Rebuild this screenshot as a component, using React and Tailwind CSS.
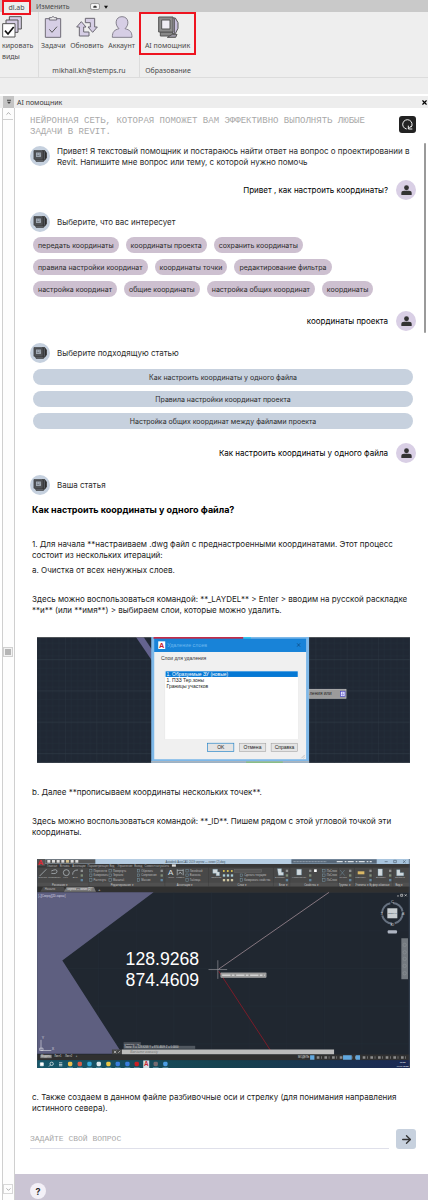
import { ArrowRight, ChevronDown, ChevronUp, X } from 'lucide-react';

const TOPICS = [
    ['передать координаты', 'координаты проекта', 'сохранить координаты'],
    ['правила настройки координат', 'координаты точки', 'редактирование фильтра'],
    ['настройка координат', 'общие координаты', 'настройка общих координат', 'координаты'],
];

const ARTICLES = [
    'Как настроить координаты у одного файла',
    'Правила настройки координат проекта',
    'Настройка общих координат между файлами проекта',
];

export default function App() {
    return (
        <div className="min-h-screen flex flex-col overflow-hidden bg-white font-['Inter','Noto_Sans',sans-serif] text-[8px] leading-[11px] text-[#2b2b2b]">
            <Ribbon />
            <PanelTitle />
            <div className="flex flex-1">
                <Gutter />
                <main className="relative flex min-w-0 flex-1 flex-col">
                    <div className="absolute right-[2px] top-[35px] h-[190px] w-[2px] rounded-full bg-[#9a9a9a]" />
                    <Chat />
                    <Footer />
                </main>
            </div>
        </div>
    );
}

function Ribbon() {
    return (
        <header className="bg-[#eeeeee] pb-4 font-['Noto_Sans',sans-serif] text-[7px] text-[#4a4a4a]">
            <nav className="flex h-3 items-start bg-[#c9c9c9] pl-[2px]">
                <button className="relative z-10 h-[15px] w-[29px] shrink-0 border-2 border-[#ee1420] bg-[#eeeeee] leading-[10px]">dl.ab</button>
                <button className="ml-[5px] h-3">Изменить</button>
                <button aria-label="Вид ленты" className="ml-5 flex h-[13px] items-center gap-1">
                    <svg className="h-[7px] w-[10px]" viewBox="0 0 30 21">
                        <rect x="1.5" y="1.5" width="27" height="18" rx="5" fill="#f4f4f4" stroke="#777" strokeWidth="2" />
                        <path d="M10 13h10l-5-6z" fill="#333" />
                        <path d="M10 10h10v4H10z" fill="#333" />
                    </svg>
                    <svg className="size-[4px]" viewBox="0 0 12 12">
                        <path d="M0 2h12L6 11z" fill="#111" />
                    </svg>
                </button>
            </nav>
            <div className="flex h-[66px] border-b border-[#dcdcdc]">
                <div className="w-[39px] shrink-0 overflow-hidden border-r border-[#dcdcdc] pt-1">
                    <StackIcon />
                    <button className="flex flex-col items-start whitespace-nowrap pl-[2px] pt-[2px] text-left">
                        <span>кировать</span>
                        <span>виды</span>
                    </button>
                </div>
                <div className="flex w-[101px] shrink-0 flex-col justify-between border-r border-[#dcdcdc] pb-[1px] pt-1">
                    <div className="flex justify-between pl-[2px] pr-1">
                        <Tool label="Задачи"><TaskIcon /></Tool>
                        <Tool label="Обновить"><SyncIcon /></Tool>
                        <Tool label="Аккаунт"><AccountIcon /></Tool>
                    </div>
                    <p className="text-center">mikhail.kh@stemps.ru</p>
                </div>
                <div className="flex w-[56px] shrink-0 flex-col justify-between pb-[1px]">
                    <div className="-ml-[1px] flex h-[43px] items-center justify-center border-2 border-[#ee1420]">
                        <Tool label="AI помощник"><ComputerIcon /></Tool>
                    </div>
                    <p className="text-center">Образование</p>
                </div>
            </div>
        </header>
    );
}

function Tool({ label, children }) {
    return (
        <button className="flex flex-col items-center gap-[2px] whitespace-nowrap">
            {children}
            <span>{label}</span>
        </button>
    );
}

function PanelTitle() {
    return (
        <div className="flex h-[14px] items-center border-t-2 border-white bg-[#ededed] font-['Noto_Sans',sans-serif] text-[7px] text-[#3c3c3c]">
            <button aria-label="Меню панели" className="ml-[3px] flex h-3 w-[11px] items-center justify-center bg-[#c4c4c4]">
                <svg className="size-[6px]" viewBox="0 0 18 18">
                    <path d="M3 2h12v3H3zM3 8h12l-6 7z" fill="#444" />
                </svg>
            </button>
            <h1 className="ml-[3px] flex-1">AI помощник</h1>
            <button aria-label="Закрыть"><X className="size-[7px] text-black" strokeWidth={4} /></button>
        </div>
    );
}

function Gutter() {
    return (
        <aside className="ml-[2px] flex w-[13px] shrink-0 border-x border-[#cfcfcf] bg-[#fdfdfd]">
            <div className="flex w-[10px] flex-col items-center justify-between">
                <button aria-label="Вверх" className="flex h-3 w-full items-center justify-center border-b border-[#d0d0d0]">
                    <ChevronUp className="size-[7px] text-[#777]" />
                </button>
                <div className="flex size-[10px] items-center justify-center border border-[#d0d0d0] bg-[#f2f2f2]">
                    <div className="size-[6px] bg-[#b5b5b5]" />
                </div>
                <button aria-label="Вниз" className="mb-[6px] flex h-[10px] w-full items-center justify-center border border-[#d8d8d8]">
                    <ChevronDown className="size-[7px] text-[#777]" />
                </button>
            </div>
        </aside>
    );
}

function Chat() {
    return (
        <div className="flex-1 pb-6 pl-[15px] pr-3 pt-2">
            <div className="flex items-start justify-between">
                <p className="max-w-[350px] font-['Liberation_Mono',monospace] text-[9px] leading-[11px] text-[#a8a8a8]">
                    НЕЙРОННАЯ СЕТЬ, КОТОРАЯ ПОМОЖЕТ ВАМ ЭФФЕКТИВНО ВЫПОЛНЯТЬ ЛЮБЫЕ ЗАДАЧИ В REVIT.
                </p>
                <button aria-label="Начать заново" className="flex size-[17px] shrink-0 items-center justify-center rounded-[3px] bg-[#222222]">
                    <svg className="size-[13px]" viewBox="0 0 39 39" fill="none" stroke="#f2f2f2" strokeWidth="3">
                        <path d="M17 33A14 14 0 1 1 30 28" />
                        <path d="M22 23v10h12" />
                        <path d="M23 32l9-9" />
                    </svg>
                </button>
            </div>

            <div className="mt-2">
                <BotMessage>
                    Привет! Я текстовый помощник и постараюсь найти ответ на вопрос о проектировании в Revit. Напишите мне вопрос или тему, с которой нужно помочь
                </BotMessage>
            </div>
            <UserMessage>Привет , как настроить координаты?</UserMessage>

            <BotMessage>Выберите, что вас интересует</BotMessage>
            <div className="mb-[14px] mt-[5px] flex flex-col gap-[6px] pl-[3px]">
                {TOPICS.map((row) => (
                    <div key={row[0]} className="flex gap-[7px]">
                        {row.map((topic) => (
                            <button key={topic} className="h-4 whitespace-nowrap rounded-full bg-[#cdc0d0] px-[5px] text-[7px]">
                                {topic}
                            </button>
                        ))}
                    </div>
                ))}
            </div>
            <UserMessage tight>координаты проекта</UserMessage>

            <BotMessage>Выберите подходящую статью</BotMessage>
            <div className="mb-[14px] mt-[6px] flex flex-col gap-[6px] px-[3px]">
                {ARTICLES.map((title) => (
                    <button key={title} className="h-4 rounded-full bg-[#c7d1de] text-[7px]">
                        {title}
                    </button>
                ))}
            </div>
            <UserMessage tight>Как настроить координаты у одного файла</UserMessage>

            <BotMessage>Ваша статья</BotMessage>
            <Article />

            <form className="mt-[15px] flex gap-[7px]" onSubmit={(e) => e.preventDefault()}>
                <input
                    aria-label="Задайте свой вопрос"
                    placeholder="ЗАДАЙТЕ СВОЙ ВОПРОС"
                    className="h-5 min-w-0 flex-1 border-b border-[#dfe0ea] font-['Liberation_Mono',monospace] text-[8px] outline-none placeholder:text-[#a8a8a8]"
                />
                <button aria-label="Отправить" className="flex size-5 shrink-0 items-center justify-center rounded-[3px] bg-[#c7d1de]">
                    <ArrowRight className="size-[13px] text-[#333]" strokeWidth={2.5} />
                </button>
            </form>
        </div>
    );
}

function BotMessage({ children }) {
    return (
        <div className="flex min-h-5 items-start gap-[7px]">
            <div className="flex size-5 shrink-0 items-center justify-center rounded-full bg-[#c5d0de]">
                <BotIcon />
            </div>
            <p className="flex min-h-5 items-center">{children}</p>
        </div>
    );
}

function UserMessage({ children, tight }) {
    return (
        <div className={`flex items-center justify-end gap-2 text-black ${tight ? 'mb-3' : 'my-3'}`}>
            <p>{children}</p>
            <div className="flex size-5 shrink-0 items-center justify-center rounded-full bg-[#d9cfe5]">
                <svg className="size-[11px]" viewBox="0 0 32 32" fill="#333">
                    <circle cx="16" cy="8" r="7" />
                    <path d="M1 29v-5q0-7 8-7h14q8 0 8 7v5z" />
                </svg>
            </div>
        </div>
    );
}

function Article() {
    return (
        <article className="mt-[9px] pl-[2px] text-[#222]">
            <h2 className="text-[9px] font-bold leading-3 text-black">Как настроить координаты у одного файла?</h2>
            <p className="mt-[23px]">
                1. Для начала **настраиваем .dwg файл с преднастроенными координатами. Этот процесс состоит из нескольких итераций:
            </p>
            <p className="mt-1">a. Очистка от всех ненужных слоев.</p>
            <p className="mt-[18px]">
                Здесь можно воспользоваться командой: **_LAYDEL** &gt; Enter &gt; вводим на русской раскладке **и** (или **имя**) &gt; выбираем слои, которые можно удалить.
            </p>
            <div className="mt-[21px] pl-[5px] pr-[6px]"><LayerDialogShot /></div>
            <p className="mt-6">b. Далее **прописываем координаты нескольких точек**.</p>
            <p className="mt-[18px]">
                Здесь можно воспользоваться командой: **_ID**. Пишем рядом с этой угловой точкой эти координаты.
            </p>
            <div className="mt-[21px] pl-[5px] pr-[6px]"><AutocadShot /></div>
            <p className="mt-6">
                c. Также создаем в данном файле разбивочные оси и стрелку (для понимания направления истинного севера).
            </p>
        </article>
    );
}

function Footer() {
    return (
        <footer className="h-[26px] bg-[#cbc5d4] pl-[15px] pt-[9px]">
            <button aria-label="Справка" className="flex size-4 items-center justify-center rounded-full bg-[#f3f0f7] text-[9px] font-bold">?</button>
        </footer>
    );
}

// Layer removal dialog over a dark drawing
function LayerDialogShot() {
    return (
        <svg className="block h-auto w-full" viewBox="20 19 1120 378" role="img" aria-label="Удаление слоев" fontFamily="'Liberation Sans', sans-serif">
            <defs>
                <pattern id="grid" x="10" y="0" width="94" height="94" patternUnits="userSpaceOnUse">
                    <path d="M19 0v94M38 0v94M57 0v94M76 0v94M0 19h94M0 38h94M0 57h94M0 76h94" stroke="#252f3b" strokeWidth="1" />
                    <path d="M0 0v94M0 87h94" stroke="#2e3946" strokeWidth="2" />
                </pattern>
            </defs>
            <rect x="20" y="19" width="1120" height="378" fill="#202834" />
            <rect x="20" y="19" width="1120" height="378" fill="url(#grid)" />
            <path d="M317 19h23l28 42v33z" fill="#64638f" />
            <path d="M20 20h1120" stroke="#777" strokeWidth="2" />
            <rect x="363" y="19" width="474" height="378" fill="#7eb8e8" />
            <rect x="370" y="19" width="270" height="6" fill="#c32b48" />
            <rect x="640" y="19" width="22" height="6" fill="#35c6ec" />
            <rect x="372" y="24" width="456" height="40" fill="#1883d8" />
            <rect x="372" y="64" width="456" height="322" fill="#f0f0f0" />
            <rect x="384" y="32" width="21" height="23" fill="#fff" />
            <text x="386" y="52" fontSize="22" fontWeight="bold" fill="#c8202d">A</text>
            <text x="411" y="50" fontSize="16" fill="#6cb8ef">Удаление слоев</text>
            <path d="M801 38l9 10m0-10l-9 10" stroke="#0d4677" strokeWidth="2" />
            <text x="392" y="88" fontSize="15" fill="#333">Слои для удаления</text>
            <rect x="404" y="120" width="401" height="207" fill="#fff" stroke="#ddd" />
            <rect x="406" y="122" width="397" height="17" fill="#0578d4" />
            <text x="409" y="137" fontSize="15" fill="#fff">1. Образуемые ЗУ (новые)</text>
            <text x="409" y="154" fontSize="15" fill="#222">1. ПЗЗ Тер.зоны</text>
            <text x="409" y="171" fontSize="15" fill="#222">Границы участков</text>
            <g fill="#e4e4e4" stroke="#999" strokeWidth="1.5">
                <rect x="532" y="338" width="79" height="25" stroke="#2584c8" strokeWidth="2" />
                <rect x="628" y="338" width="79" height="25" />
                <rect x="723" y="338" width="79" height="25" />
            </g>
            <g fontSize="15" fill="#222" textAnchor="middle">
                <text x="572" y="356">OK</text>
                <text x="667" y="356">Отмена</text>
                <text x="763" y="356">Справка</text>
            </g>
            <path d="M814 383l10-10m-4 10l4-4" stroke="#aaa" strokeWidth="2" />
            <rect x="837" y="176" width="111" height="27" fill="#9b9b9b" stroke="#c2c2c2" strokeWidth="2" />
            <text x="838" y="193" fontSize="14" fill="#222">ления или</text>
            <rect x="931" y="182" width="14" height="16" fill="#e2e2ff" stroke="#443fc0" strokeWidth="2" />
            <path d="M938 185v9m-3-3l3 3 3-3" stroke="#443fc0" strokeWidth="1.5" fill="none" />
            <path d="M363 394h474" stroke="#a8b4c0" strokeWidth="5" />
            <path d="M648 395h110" stroke="#88bd88" strokeWidth="4" />
        </svg>
    );
}

const RIBBON_GROUPS = [
    [75, 'Рисование'], [262, 'Редактирование'], [450, 'Аннотации'], [622, 'Слои'],
    [746, 'Блок'], [830, 'Свойства'], [930, 'Группы'], [982, 'Утилиты'], [1036, 'Буфер обмена'], [1094, 'Вид'],
];

const RIBBON_TABS = [
    [50, 'Главная'], [88, 'Вставка'], [126, 'Аннотации'], [172, 'Параметризация'], [238, 'Вид'],
    [262, 'Управление'], [312, 'Вывод'], [343, 'Совместная работа'],
];

const RIBBON_TOOLS = [
    [190, 60, 'Перенести'], [190, 74, 'Копировать'], [190, 88, 'Растянуть'],
    [248, 60, 'Повернуть'], [248, 74, 'Зеркало'], [248, 88, 'Масштаб'],
    [333, 60, 'Обрезать'], [333, 74, 'Сопряжение'], [333, 88, 'Массив'],
    [479, 60, 'Линейный'], [479, 74, 'Выноска'], [479, 88, 'Таблица'],
    [642, 74, 'Сделать текущим'], [642, 88, 'Копировать свойства'],
    [890, 60, 'ПоСлою'], [890, 74, 'ПоСлою'], [890, 88, 'ПоСлою'],
];

const TASKBAR = [
    [119, '#f0c04d'], [148, '#d85a45'], [177, '#35a7d8'], [205, '#dce6ea'], [234, '#eac644'],
    [262, '#397ddd'], [291, '#397ddd'], [319, '#c71f25'], [376, '#756a70'], [405, '#4b9ce2'],
];

// Full CAD window with the coordinates typed next to the corner point
function AutocadShot() {
    return (
        <svg className="block h-auto w-full" viewBox="20 24 1120 629" role="img" aria-label="Координаты угловой точки" fontFamily="'Liberation Sans', sans-serif">
            <defs>
                <linearGradient id="taskbar" x1="0" x2="1">
                    <stop offset="0" stopColor="#17576a" />
                    <stop offset="0.5" stopColor="#16424f" />
                    <stop offset="1" stopColor="#1c2853" />
                </linearGradient>
            </defs>
            <rect x="20" y="24" width="1120" height="629" fill="#202730" />
            <rect x="20" y="24" width="1120" height="15" fill="#a9c5de" />
            <rect x="196" y="24" width="588" height="15" fill="#b6cde2" />
            <rect x="20" y="39" width="1120" height="85" fill="#484848" />
            <rect x="20" y="39" width="1120" height="11" fill="#383838" />
            <rect x="20" y="95" width="1120" height="12" fill="#505050" />
            <rect x="20" y="107" width="1120" height="17" fill="#303030" />
            <rect x="45" y="25" width="150" height="13" fill="#555" />
            {[55, 69, 83, 97, 111, 125, 139].map((x) => (
                <rect key={x} x={x - 4} y="27" width="9" height="8" fill={x === 111 ? '#d5c18d' : '#dbdbdb'} />
            ))}
            <rect x="20" y="24" width="25" height="20" fill="#555" />
            <text x="22" y="42" fontSize="23" fontWeight="bold" fill="#e22531">A</text>
            <text x="406" y="35" fontSize="8" fill="#425261">Autodesk AutoCAD 2019   чертеж — копия (2).dwg</text>
            <rect x="784" y="25" width="256" height="13" fill="#586879" />
            <path d="M790 32h100" stroke="#afbac5" strokeWidth="2" strokeDasharray="7 2" />
            <path d="M920 32h105" stroke="#d8dee4" strokeWidth="4" strokeDasharray="18 6 5 4" />
            <path d="M1064 32h9M1091 28h8v7h-8zM1119 28l8 8m0-8l-8 8" stroke="#526476" strokeWidth="2" fill="none" />
            <g fontSize="8" fill="#b5b5b5">
                {RIBBON_TABS.map(([x, name]) => <text key={name} x={x} y="48">{name}</text>)}
            </g>
            <rect x="425" y="40" width="12" height="7" fill="#ddd" />

            <g stroke="#bfc9ce" strokeWidth="2" fill="none">
                <path d="M28 75L48 55M63 60q17-8 17 1t-17 6M127 71q0-14 16-14" />
                <circle cx="108" cy="65" r="9" />
                <path d="M441 58h18M441 55v18M459 55v18M445 70l5-7 5 7" />
            </g>
            <g fontSize="7" fill="#bdbdbd">
                <text x="24" y="82">Отрезок</text>
                <text x="54" y="82">Полилиния</text>
                <text x="99" y="82">Круг</text>
                <text x="127" y="82">Дуга</text>
                <text x="414" y="82">Текст</text>
                <text x="438" y="82">Размер</text>
                <text x="543" y="82">Свойства</text>
                <text x="735" y="82">Вставить</text>
                <text x="786" y="82">Копирование</text>
                <text x="928" y="82">Группа</text>
                <text x="976" y="82">Измерить</text>
                <text x="1038" y="82">Вставить</text>
                <text x="1096" y="82">Базовый</text>
            </g>
            <text x="413" y="73" fontSize="24" fill="#d9e0e4">A</text>
            {RIBBON_TOOLS.map(([x, y, name]) => (
                <g key={`${x}-${y}`}>
                    <rect x={x - 12} y={y - 5} width="7" height="8" fill="none" stroke="#7795a4" strokeWidth="1.5" />
                    <text x={x} y={y + 2} fontSize="8" fill="#bcbcbc">{name}</text>
                </g>
            ))}
            {[154, 394, 770, 840, 960, 1021, 1080].map((x) => (
                <g key={x}>
                    <rect x={x - 3} y="56" width="7" height="7" fill="#8f9191" />
                    <rect x={x - 3} y="70" width="7" height="7" fill="#7f8d78" />
                    <rect x={x - 3} y="84" width="7" height="7" fill="#5f85a0" />
                </g>
            ))}
            <path d="M548 55h14v8h6v11h-10v-7h-10zM742 53h12v11h6v9h-15zM800 55h14v17h-14zM930 57l14 17m0-17l-14 17M1044 54h13v20h-13zM1100 56h10v9h11v9h-21z" fill="#d2d9dd" stroke="#7eacc5" />
            <rect x="983" y="61" width="20" height="9" fill="#d9b766" />
            {[581, 593, 605].map((x) => (
                <g key={x}>
                    <circle cx={x} cy="60" r="3" fill="#e0c84f" />
                    <rect x={x - 3} y="70" width="7" height="7" fill="#a9ced8" />
                    <rect x={x - 3} y="84" width="7" height="7" fill="#cfc6a2" />
                </g>
            ))}
            <rect x="613" y="55" width="82" height="9" fill="#555" stroke="#777" />
            <rect x="852" y="55" width="8" height="8" fill="#fff" />
            <g fontSize="8" fill="#cacaca" textAnchor="middle">
                {RIBBON_GROUPS.map(([x, name]) => <text key={name} x={x + 14} y="104">{name} ▾</text>)}
            </g>
            <path d="M176 50v56M404 50v56M535 50v56M730 50v56M779 50v56M925 50v56M973 50v56M1027 50v56M1088 50v56" stroke="#333" />
            <path d="M30 122l8-14h62l7 14z" fill="#4a4a4a" />
            <path d="M101 122l8-14h82l6 14z" fill="#777" />
            <text x="43" y="118" fontSize="9" fill="#bbb">Начало</text>
            <text x="111" y="118" fontSize="8" fill="#eee">чертеж — копия (2)*</text>
            <text x="203" y="120" fontSize="13" fill="#ddd">+</text>

            <g stroke="#27323d" strokeWidth="1">
                <path d="M205 124v486M318 124v486M431 124v486M544 124v486M657 124v486M770 124v486M883 124v486M996 124v486" />
                <path d="M20 240h1116M20 353h1116M20 466h1116M20 579h1116" />
            </g>
            <path d="M20 124h350L96 329l180 280H20z" fill="#5e5f80" />
            <text x="24" y="137" fontSize="8" fill="#d5d6e0">[–][Сверху][2D-каркас]</text>
            <text x="286" y="341" fontSize="53" fill="#fff">128.9268</text>
            <text x="286" y="404" fontSize="53" fill="#fff">874.4609</text>
            <path d="M565 355L897 124" stroke="#86767f" strokeWidth="3" />
            <path d="M565 360L722 600" stroke="#7a1c29" strokeWidth="3" />
            <path d="M535 356h56M563 328v56" stroke="#96969c" strokeWidth="2" />
            <rect x="572" y="366" width="136" height="14" fill="#9a9a9a" stroke="#ccc" />
            <path d="M576 373h128" stroke="#d2d2d2" strokeWidth="5" strokeDasharray="25 4 8 5" />

            <circle cx="1087" cy="187" r="31" fill="none" stroke="#667180" strokeWidth="6" strokeDasharray="41 8" />
            <rect x="1072" y="172" width="30" height="30" fill="#c8ced2" />
            <text x="1087" y="190" fontSize="7" textAnchor="middle" fill="#46545f">СВЕРХУ</text>
            <g fontSize="11" fill="#ddd" textAnchor="middle">
                <text x="1087" y="157">С</text>
                <text x="1087" y="224">Ю</text>
                <text x="1055" y="191">З</text>
                <text x="1120" y="191">В</text>
            </g>
            <rect x="1073" y="238" width="28" height="10" rx="3" fill="#aeb5c2" />
            <path d="M1101 135h6M1112 130h6v6h-6zM1124 130l6 6m0-6l-6 6" stroke="#ddd" strokeWidth="2" fill="none" />
            <rect x="1114" y="262" width="20" height="123" fill="#73797f" />
            {[282, 304, 324, 345, 367].map((y) => <circle key={y} cx="1124" cy={y} r="5" fill="none" stroke="#8a8f94" strokeWidth="2" />)}

            <path d="M32 567v32h31M28 599h10v-7H28z" stroke="#d6d6df" strokeWidth="2" fill="none" />
            <text x="34" y="566" fontSize="11" fill="#d6d6df">Y</text>
            <text x="64" y="599" fontSize="11" fill="#d6d6df">X</text>
            <rect x="280" y="574" width="52" height="10" fill="#4a5058" />
            <text x="282" y="582" fontSize="7" fill="#ccc">Команда: '_ID</text>
            <rect x="280" y="585" width="215" height="9" fill="#515860" />
            <text x="282" y="592" fontSize="8" fill="#ddd">Точка: X = 128.9268   Y = 874.4609   Z = 0.0000</text>
            <rect x="245" y="596" width="30" height="15" fill="#454545" />
            <path d="M251 600l7 7m0-7l-7 7M264 606l6-6" stroke="#ddd" strokeWidth="2" />
            <rect x="275" y="596" width="637" height="15" fill="#bcbcbc" />
            <text x="300" y="607" fontSize="10" fontStyle="italic" fill="#777">Введите команду</text>
            <rect x="20" y="611" width="1120" height="17" fill="#303030" />
            <rect x="30" y="612" width="34" height="10" fill="#888" />
            <g fontSize="8" fill="#ddd">
                <text x="32" y="620">Модель</text>
                <text x="72" y="620">Лист1</text>
                <text x="104" y="620">Лист2</text>
                <text x="136" y="620">+</text>
                <text x="804" y="623">МОДЕЛЬ</text>
            </g>
            <path d="M860 620h275" stroke="#8c8c8c" strokeWidth="7" strokeDasharray="8 5 2 8" />
            <path d="M840 613h13v14h-13zM939 613h26v14h-26zM977 613h13v14h-13z" fill="#61a8df" />
            <rect x="20" y="628" width="1120" height="25" fill="url(#taskbar)" />
            <path d="M30 636h9v9h-9zM86 636h10M86 641h10M86 645h10" stroke="#fff" strokeWidth="2" fill="#fff" />
            <circle cx="64" cy="639" r="5" stroke="#fff" strokeWidth="2" fill="none" />
            <path d="M60 643l-4 4" stroke="#fff" strokeWidth="2" />
            {TASKBAR.map(([x, fill]) => (
                <g key={x}>
                    <rect x={x - 6} y="633" width="13" height="13" rx="4" fill={fill} />
                    <path d={`M${x - 8} 651h17`} stroke="#83bad2" strokeWidth="2" />
                </g>
            ))}
            <rect x="339" y="629" width="18" height="23" fill="#d8dfe2" />
            <text x="341" y="647" fontSize="19" fontWeight="bold" fill="#c62532">A</text>
            <g fontSize="7" fill="#fff" textAnchor="middle">
                <text x="1118" y="637">13:25</text>
                <text x="1118" y="648">07.09.2023</text>
            </g>
            <path d="M20 24v629M1138 24v629" stroke="#425062" strokeWidth="2" />
        </svg>
    );
}

function StackIcon() {
    return (
        <svg className="ml-[2px] h-[22px] w-5" viewBox="6 47 60 66" fill="#d6cee5" stroke="#555" strokeWidth="3">
            <path d="M28 49h36v37H28z" />
            <path d="M18 59h36v37H18z" />
            <path d="M8 70h37v40H8z" fill="#fff" />
            <path d="M15 91l9 10 17-21" fill="none" stroke="#111" strokeWidth="5" />
        </svg>
    );
}

function TaskIcon() {
    return (
        <svg className="h-[22px] w-[18px]" viewBox="138 48 54 66" fill="#d6cee5" stroke="#706d78" strokeWidth="3">
            <path d="M142 56h46v56h-46z" />
            <path d="M154 60v-7h6q5-7 10 0h6v7z" fill="#eee" />
            <path d="M154 88l8 9 15-17" fill="none" stroke="#555" />
        </svg>
    );
}

function SyncIcon() {
    return (
        <svg className="h-[22px] w-[22px]" viewBox="231 49 66 66" fill="#d6cee5" stroke="#6b6872" strokeWidth="3">
            <path d="M259 56h28v26h8l-14 16-14-16h7V69h-15z" />
            <path d="M247 66l14 16h-7v15h16v12h-29V82h-8z" />
        </svg>
    );
}

function AccountIcon() {
    return (
        <svg className="h-[22px] w-[22px]" viewBox="336 48 66 66" fill="#d6cee5" stroke="#85818e" strokeWidth="3">
            <path d="M340 112c0-17 6-22 20-26-14-12-11-36 9-36s23 24 9 36c15 4 21 9 21 26z" />
        </svg>
    );
}

function ComputerIcon() {
    return (
        <svg className="h-[22px] w-[22px]" viewBox="468 48 66 66" stroke="#555" strokeWidth="3">
            <path d="M513 54h10l8 14v17l-8 16h-10z" fill="#c8bfdc" />
            <path d="M520 55v44" />
            <path d="M478 96h37v12h-37z" fill="#888" />
            <path d="M473 51h43v45h-43z" fill="#8d8d8d" />
            <path d="M482 60h25v27h-25z" fill="#efedf4" />
            <path d="M499 112h25l4-9h-14z" fill="#9c98a5" />
        </svg>
    );
}

function BotIcon() {
    return (
        <svg className="size-[14px]" viewBox="0 0 45 45" stroke="#333" strokeWidth="2">
            <path d="M31 5h7l6 9v13l-6 9h-7z" fill="#2d2d2d" />
            <path d="M36 7v27" stroke="#8b95a1" />
            <path d="M7 33h27v7H10z" fill="#5b5e63" />
            <path d="M3 5h29v28H3z" fill="#55585d" />
            <path d="M8 10h19v17H8z" fill="#a8b1bc" />
            <path d="M12 16h5m3 0h4M12 21h9" stroke="#555b63" strokeWidth="2" />
        </svg>
    );
}
